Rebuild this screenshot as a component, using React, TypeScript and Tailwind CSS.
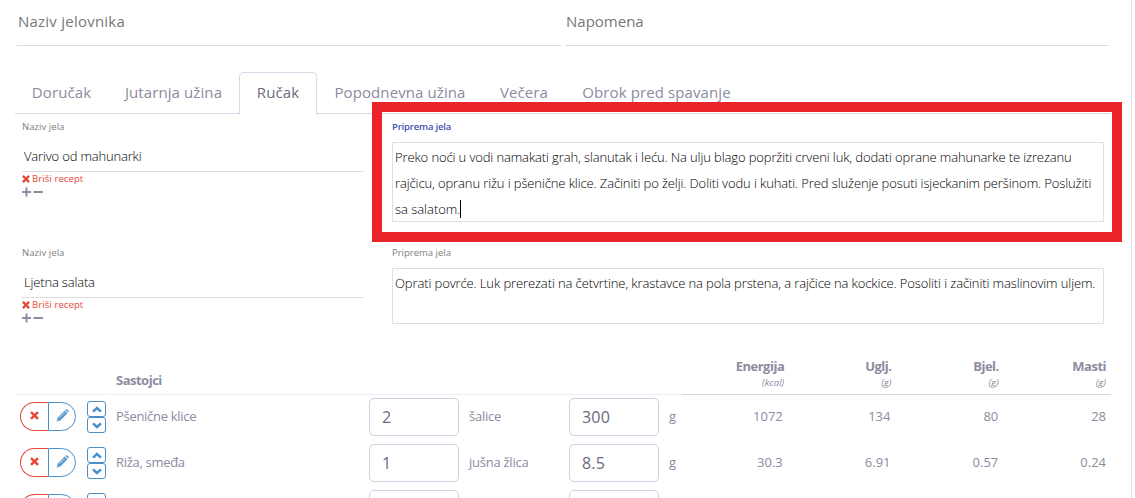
import type { ReactNode } from "react";

const tabs = [
  { name: "Doručak", box: "w-[93px]" },
  { name: "Jutarnja užina", box: "w-[131px]" },
  { name: "Ručak", box: "w-[78px]" },
  { name: "Popodnevna užina", box: "w-[166px]" },
  { name: "Večera", box: "w-[82px]" },
  { name: "Obrok pred spavanje", box: "w-[183px]" },
];

function Cross({ className }: { className: string }) {
  return (
    <svg viewBox="0 0 8 8" className={className} fill="none" stroke="currentColor" strokeWidth="2.2">
      <path d="M0.9 0.9 7.1 7.1M7.1 0.9 0.9 7.1" />
    </svg>
  );
}

function Pencil() {
  return (
    <svg viewBox="0 0 13 13" className="h-[13px] w-[13px]">
      <path d="M0.600 12.400 1.300 8.900 8.700 1.500 11.500 4.300 4.100 11.700Z" fill="currentColor" />
      <path d="M9.400 0.900 10.300 0.300Q10.900 0 11.500 0.600L12.400 1.500Q13 2.100 12.600 2.700L12 3.600Z" fill="currentColor" />
      <path d="M3.300 8.800 8.400 3.700" stroke="white" strokeWidth="0.6" />
      <path d="M1.500 10.600 2.400 11.500" stroke="white" strokeWidth="0.9" />
    </svg>
  );
}

function Chevron({ down = false }: { down?: boolean }) {
  return (
    <svg viewBox="0 0 10 7" className="h-[7px] w-[10px]" fill="none" stroke="currentColor" strokeWidth="2.5">
      <path d={down ? "M1 1.300 5 5 9 1.300" : "M1 5.700 5 2 9 5.700"} />
    </svg>
  );
}

function Dish({ name, active, children }: { name: string; active?: boolean; children: ReactNode }) {
  return (
    <section className="flex h-[126px] items-start pl-[22px]">
      <div className="w-[342px]">
        <div className="mt-[5px] h-4 text-[9.5px] leading-4 tracking-[0.05px] text-[#808080]">Naziv jela</div>
        <div className="mt-[7px] h-[30px] border-b border-[#dedede] pl-[2px] text-[13px] leading-[28px] font-[350] tracking-[-0.17px] text-black">{name}</div>
        <div className="flex h-[14px] items-center gap-[2px] text-[9.5px] leading-[14px] tracking-[0.1px] text-[#e5473a]">
          <Cross className="mb-px h-[8px] w-[8px]" />
          Briši recept
        </div>
        <svg viewBox="0 0 22 12" className="h-3 w-[22px]" fill="none" stroke="#8e8da3" strokeWidth="2">
          <path d="M0 6h9M4.500 1.500v9M11.500 6h9.500" />
        </svg>
      </div>
      <div className="ml-7 w-[712px]">
        <div className={`mt-[5px] h-4 text-[9.5px] leading-4 ${active ? "font-semibold text-[#3f51b5] tracking-[-0.17px]" : "text-[#808080]"}`}>Priprema jela</div>
        {children}
      </div>
    </section>
  );
}

const heads = [
  { name: "Energija", unit: "kcal", cell: "w-[108px] pr-[5px]" },
  { name: "Uglj.", unit: "g", cell: "w-[107px] pr-[5px]" },
  { name: "Bjel.", unit: "g", cell: "w-[107px] pr-[5px]" },
  { name: "Masti", unit: "g", cell: "w-[107px] pr-[5px]" },
];

const rows = [
  { name: "Pšenične klice", amount: "2", unit: "šalice", grams: "300", values: ["1072", "134", "80", "28"] },
  { name: "Riža, smeđa", amount: "1", unit: "jušna žlica", grams: "8.5", values: ["30.3", "6.91", "0.57", "0.24"] },
  { name: "", amount: "", unit: "", grams: "", values: ["", "", "", ""] },
];

function Field({ value }: { value: string }) {
  return (
    <div className="h-[38px] w-[90px] shrink-0 rounded-[5px] border border-[#d1cfe2] pl-3 text-[16px] leading-[36px] tracking-[0.2px] text-[#6b6a7b]">{value}</div>
  );
}

export default function App() {
  return (
    <main className="relative h-[498px] w-[1132px] overflow-hidden border-r border-[#dfdfee] bg-white font-['Open_Sans','Noto_Sans',sans-serif]">
      <header className="flex h-[46px] gap-1 pl-[17px] text-[15px] leading-[43px] text-[#777]">
        <div className="w-[544px] border-b border-[#dedede] pl-px tracking-[0.23px]">Naziv jelovnika</div>
        <div className="w-[544px] border-b border-[#dedede] pl-px">Napomena</div>
      </header>
      <nav className="mt-[26px] ml-[15px] flex h-[42px] w-[1096px] text-center text-[15px] leading-[38px] tracking-[0.1px] text-[#8c8ba0]">
        {tabs.map((tab) => (
          <div
            key={tab.name}
            className={`${tab.box} shrink-0 whitespace-nowrap border-[#d8d8e8] ${tab.name === "Ručak" ? "rounded-t-[5px] border-x border-t text-[#6e6c7e]" : "border-b pt-px"}`}
          >
            {tab.name}
          </div>
        ))}
        <div className="flex-1 border-b border-[#d8d8e8]" />
      </nav>

      <Dish name="Varivo od mahunarki" active>
        <div className="mt-[7px] h-[80px] w-[712px] whitespace-nowrap border border-[#dfdfdf] pt-px pl-[2px] text-[13px] leading-[26px] font-[350] text-black">
          <div className="tracking-[-0.12px]">Preko noći u vodi namakati grah, slanutak i leću. Na ulju blago popržiti crveni luk, dodati oprane mahunarke te izrezanu</div>
          <div className="tracking-[-0.115px]">rajčicu, opranu rižu i pšenične klice. Začiniti po želji. Doliti vodu i kuhati. Pred služenje posuti isjeckanim peršinom. Poslužiti</div>
          <div className="flex items-center tracking-[-0.03px]">
            sa salatom.<span className="h-[18px] w-px bg-black" />
          </div>
        </div>
      </Dish>
      <Dish name="Ljetna salata">
        <div className="mt-[7px] h-[56px] w-[712px] whitespace-nowrap border border-[#dfdfdf] pt-px pl-[2px] text-[13px] leading-[26px] font-[350] tracking-[-0.11px] text-black">
          Oprati povrće. Luk prerezati na četvrtine, krastavce na pola prstena, a rajčice na kockice. Posoliti i začiniti maslinovim uljem.
        </div>
      </Dish>

      <section className="ml-4 w-[1095px] text-[13px] text-[#8c8ba0]">
        <div className="flex h-[28px] items-end font-bold">
          <div className="mb-[-1px] h-[29px] w-[94px] shrink-0 border-b border-[#ededf2]" />
          <div className="mb-[-1px] ml-[2px] h-[29px] w-[570px] shrink-0 border-b border-[#ededf2] pt-1 pl-1 leading-5 tracking-[-0.5px]">Sastojci</div>
          {heads.map((head) => (
            <div key={head.name} className={`${head.cell} mb-[-1px] flex h-[44px] flex-1 flex-col items-end border-b border-[#d6d4e4] pt-[5px] tracking-[-0.5px]`}>
              <span className="leading-5">{head.name}</span>
              <span className="pt-px text-[9.5px] leading-3 font-normal tracking-normal italic">({head.unit})</span>
            </div>
          ))}
        </div>
        {rows.map((row, index) => (
          <div key={index} className="flex h-[46px] items-center">
            <div className="mb-px ml-1 flex h-[29px] w-14 shrink-0">
              <div className="flex w-7 items-center justify-center rounded-l-full border border-r-0 border-[#e5473a] pr-px pb-[2px] text-[#e5473a]"><Cross className="h-[9px] w-[9px]" /></div>
              <div className="flex w-7 items-center justify-center rounded-r-full border border-[#4a90c8] pb-[2px] text-[#5d9bcc]"><Pencil /></div>
            </div>
            <div className="ml-[11px] flex w-[19px] shrink-0 flex-col text-[#4a90c8]">
              <div className="flex h-4 items-center justify-center rounded-[3px] border border-[#4a90c8]"><Chevron /></div>
              <div className="flex h-4 items-center justify-center rounded-[3px] border border-[#4a90c8]"><Chevron down /></div>
            </div>
            <div className="ml-[10px] w-[253px] shrink-0 pb-px tracking-[-0.3px]">{row.name}</div>
            <Field value={row.amount} />
            <div className="ml-[10px] w-[100px] shrink-0 pb-px tracking-[-0.25px]">{row.unit}</div>
            <Field value={row.grams} />
            <div className="ml-[10px] w-[11px] shrink-0">{row.name && "g"}</div>
            {row.values.map((value, column) => (
              <div key={column} className={`${heads[column].cell} flex-1 pb-px text-right`}>{value}</div>
            ))}
          </div>
        ))}
      </section>

      <div className="pointer-events-none absolute top-[102px] left-[372px] h-[140px] w-[750px] border-[10px] border-[#ea2429]" />
    </main>
  );
}
